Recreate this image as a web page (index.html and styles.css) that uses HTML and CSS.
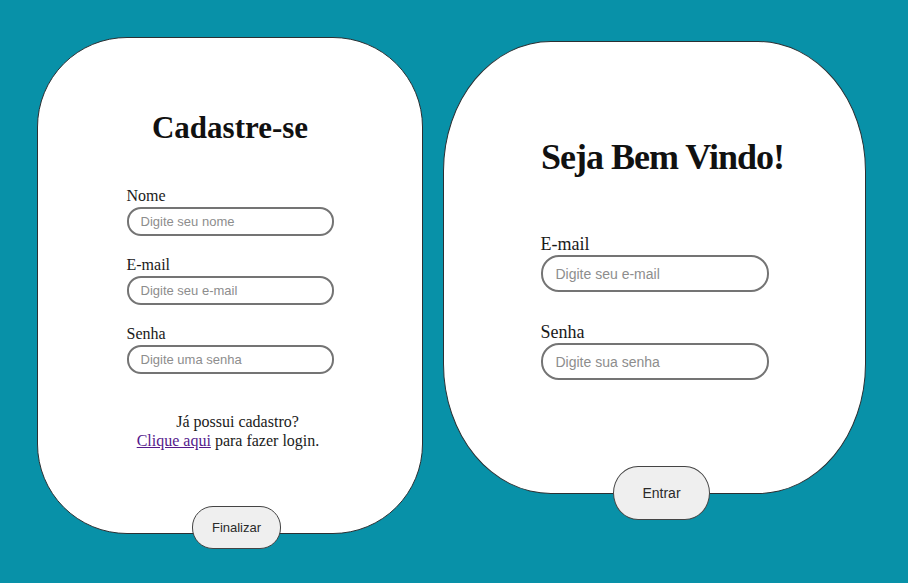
FILE: index.html
```html
<!DOCTYPE html>
<html lang="pt-BR">
<head>
<meta charset="utf-8">
<title>Cadastro e Login</title>
<link rel="stylesheet" href="styles.css">
</head>
<body>
<main class="page">
  <section class="card card-signup">
    <h1 class="title">Cadastre-se</h1>
    <form class="form form-signup">
      <div class="field">
        <label class="label" for="nome">Nome</label>
        <input class="input" id="nome" type="text" placeholder="Digite seu nome">
      </div>
      <div class="field">
        <label class="label" for="email1">E-mail</label>
        <input class="input" id="email1" type="email" placeholder="Digite seu e-mail">
      </div>
      <div class="field">
        <label class="label" for="senha1">Senha</label>
        <input class="input" id="senha1" type="password" placeholder="Digite uma senha">
      </div>
    </form>
    <p class="hint">
      <span class="hint-line hint-first">Já possui cadastro?</span>
      <span class="hint-line hint-second"><a class="link" href="#">Clique aqui</a> para fazer login.</span>
    </p>
    <button class="btn btn-signup" type="button">Finalizar</button>
  </section>

  <section class="card card-login">
    <h1 class="title title-login">Seja Bem Vindo!</h1>
    <form class="form form-login">
      <div class="field">
        <label class="label" for="email2">E-mail</label>
        <input class="input" id="email2" type="email" placeholder="Digite seu e-mail">
      </div>
      <div class="field">
        <label class="label" for="senha2">Senha</label>
        <input class="input" id="senha2" type="password" placeholder="Digite sua senha">
      </div>
    </form>
    <button class="btn btn-login" type="button">Entrar</button>
  </section>
</main>
</body>
</html>
```
FILE: styles.css
```css
html, body {
  margin: 0;
  padding: 0;
  height: 100%;
}

body {
  background: #0891a8;
  font-family: "Liberation Serif", "Times New Roman", serif;
  color: #111;
  overflow: hidden;
}

.page {
  display: flex;
  align-items: flex-start;
  gap: 20px;
  padding: 37px 0 0 37px;
}

.card {
  box-sizing: border-box;
  background: #fff;
  border: 1px solid #2b3033;
  display: flex;
  flex-direction: column;
  align-items: center;
}

.card-signup {
  width: 386px;
  height: 497px;
  border-radius: 90px;
  padding-top: 72px;
}

.card-login {
  width: 423px;
  height: 453px;
  margin-top: 4px;
  border-radius: 108px / 130px;
  padding-top: 95px;
}

.title {
  margin: 0;
  font-size: 31px;
  line-height: 36px;
  font-weight: bold;
  color: #111;
}

.title-login {
  font-size: 36px;
  line-height: 40px;
  letter-spacing: -1px;
  padding-left: 16px;
}

.form {
  display: flex;
  flex-direction: column;
}

.form-signup {
  width: 207px;
  margin-top: 41px;
  gap: 20px;
}

.form-login {
  width: 228px;
  margin-top: 57px;
  gap: 30px;
}

.field {
  display: flex;
  flex-direction: column;
}

.label {
  font-size: 16px;
  line-height: 18px;
  color: #1a1a1a;
}

.form-login .label {
  font-size: 18px;
  line-height: 20px;
}

.input {
  box-sizing: border-box;
  width: 100%;
  margin: 2px 0 0;
  border: 2px solid #747474;
  background: #fff;
  font-family: "Liberation Sans", Arial, sans-serif;
  outline: none;
}

.form-signup .input {
  height: 29px;
  border-radius: 14px;
  padding: 0 12px;
  font-size: 13px;
}

.form-login .input {
  height: 37px;
  border-radius: 18px;
  padding: 0 13px;
  font-size: 14px;
  margin-top: 1px;
}

.input::placeholder {
  color: #8d8d8d;
}

.hint {
  margin: 39px 0 0;
  display: flex;
  flex-direction: column;
  align-items: center;
  font-size: 16px;
  line-height: 18.5px;
  color: #1a1a1a;
}

.hint-first {
  padding-left: 15px;
}

.hint-second {
  padding-right: 4px;
}

.link {
  color: #551a8b;
  text-decoration: underline;
}

.btn {
  box-sizing: border-box;
  margin-top: auto;
  background: #efefef;
  border: 1.5px solid #444;
  color: #2a2a2a;
  font-family: "Liberation Sans", Arial, sans-serif;
  cursor: pointer;
}

.btn-signup {
  width: 89px;
  height: 43px;
  border-radius: 21px;
  margin-bottom: -16px;
  margin-left: 13px;
  font-size: 13px;
}

.btn-login {
  width: 97px;
  height: 54px;
  border-radius: 26px / 28px;
  margin-bottom: -27px;
  margin-left: 14px;
  font-size: 14px;
}
```
